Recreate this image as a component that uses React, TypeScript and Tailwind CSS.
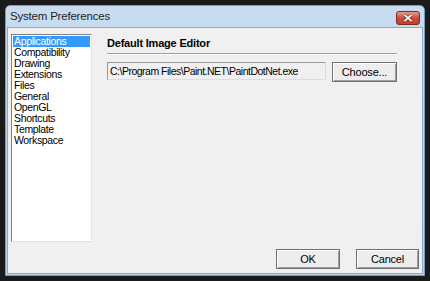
import React from 'react';

const items = [
  'Applications',
  'Compatibility',
  'Drawing',
  'Extensions',
  'Files',
  'General',
  'OpenGL',
  'Shortcuts',
  'Template',
  'Workspace',
];

const Button: React.FC<{ label: string; className?: string }> = ({ label, className }) => (
  <button
    className={`border border-[#707070] bg-[#ededed] text-[11px] tracking-[-0.2px] text-black shadow-[inset_1px_1px_0_#ffffff,inset_-1px_-1px_0_#a0a0a0] ${className ?? ''}`}
  >
    {label}
  </button>
);

export default function App() {
  return (
    <div
      className="w-[430px] h-[281px] bg-[#1b1a1a] p-[5px] overflow-hidden"
      style={{ fontFamily: '"Liberation Sans", Arial, sans-serif' }}
    >
      {/* Window */}
      <div className="w-[420px] h-[271px] flex flex-col rounded-t-[5px] border border-[#7e9cc0] bg-gradient-to-b from-[#c8dcf1] to-[#b9d0ea]">
        {/* Title bar */}
        <div className="h-[21px] flex items-center justify-between pl-[4px] pr-[4px] shrink-0">
          <span className="text-[11.5px] tracking-[-0.2px] text-[#1e1e1e]">System Preferences</span>
          <div className="w-[24px] h-[14px] mt-[2px] rounded-[3px] border border-[#7a2b22] bg-gradient-to-b from-[#e49a8c] via-[#c9503e] to-[#c13d2b] flex items-center justify-center">
            <svg width="10" height="8" viewBox="0 0 10 8">
              <path d="M1.5 1 L8.5 7 M8.5 1 L1.5 7" stroke="#5a1a12" strokeWidth="3" />
              <path d="M1.5 1 L8.5 7 M8.5 1 L1.5 7" stroke="#ffffff" strokeWidth="1.8" />
            </svg>
          </div>
        </div>

        {/* Client area */}
        <div className="flex-1 mx-[1px] mb-[1px] bg-[#f0f0f0] border border-[#8fa9c6] flex flex-col">
          <div className="flex flex-1 pt-[6px] pl-[3px] pr-[25px]">
            {/* List */}
            <div className="w-[81px] h-[208px] bg-white border-t border-l border-[#828282] border-r-[#e3e3e3] border-b-[#e3e3e3] border-r border-b pt-[1px] px-[1px]">
              {items.map((it, i) => (
                <div
                  key={it}
                  className={`h-[11px] leading-[11px] text-[10.5px] tracking-[-0.35px] pl-[1px] ${i === 0 ? 'bg-[#3399ff] text-white' : 'text-black'}`}
                >
                  {it}
                </div>
              ))}
            </div>

            {/* Right panel */}
            <div className="flex-1 ml-[15px] flex flex-col">
              <div className="text-[11px] font-bold text-black mt-[3px] leading-[12px] tracking-[-0.2px]">Default Image Editor</div>
              <div className="h-[1px] bg-[#a0a0a0] border-b border-white mt-[4px] box-content" />
              <div className="flex mt-[7px] items-start">
                <div className="w-[219px] h-[18px] border-t border-l border-[#9a9a9a] border-r border-b border-r-[#dcdcdc] border-b-[#dcdcdc] bg-[#f0f0f0] text-[10.5px] tracking-[-0.5px] leading-[16px] pl-[2px] text-black whitespace-nowrap overflow-hidden">
                  C:\Program Files\Paint.NET\PaintDotNet.exe
                </div>
                <Button label="Choose..." className="ml-[6px] w-[65px] h-[20px]" />
              </div>
            </div>
          </div>

          {/* Bottom buttons */}
          <div className="flex justify-end gap-[16px] pr-[3px] pb-[4px]">
            <Button label="OK" className="w-[64px] h-[20px]" />
            <Button label="Cancel" className="w-[63px] h-[20px]" />
          </div>
        </div>
      </div>
    </div>
  );
}
